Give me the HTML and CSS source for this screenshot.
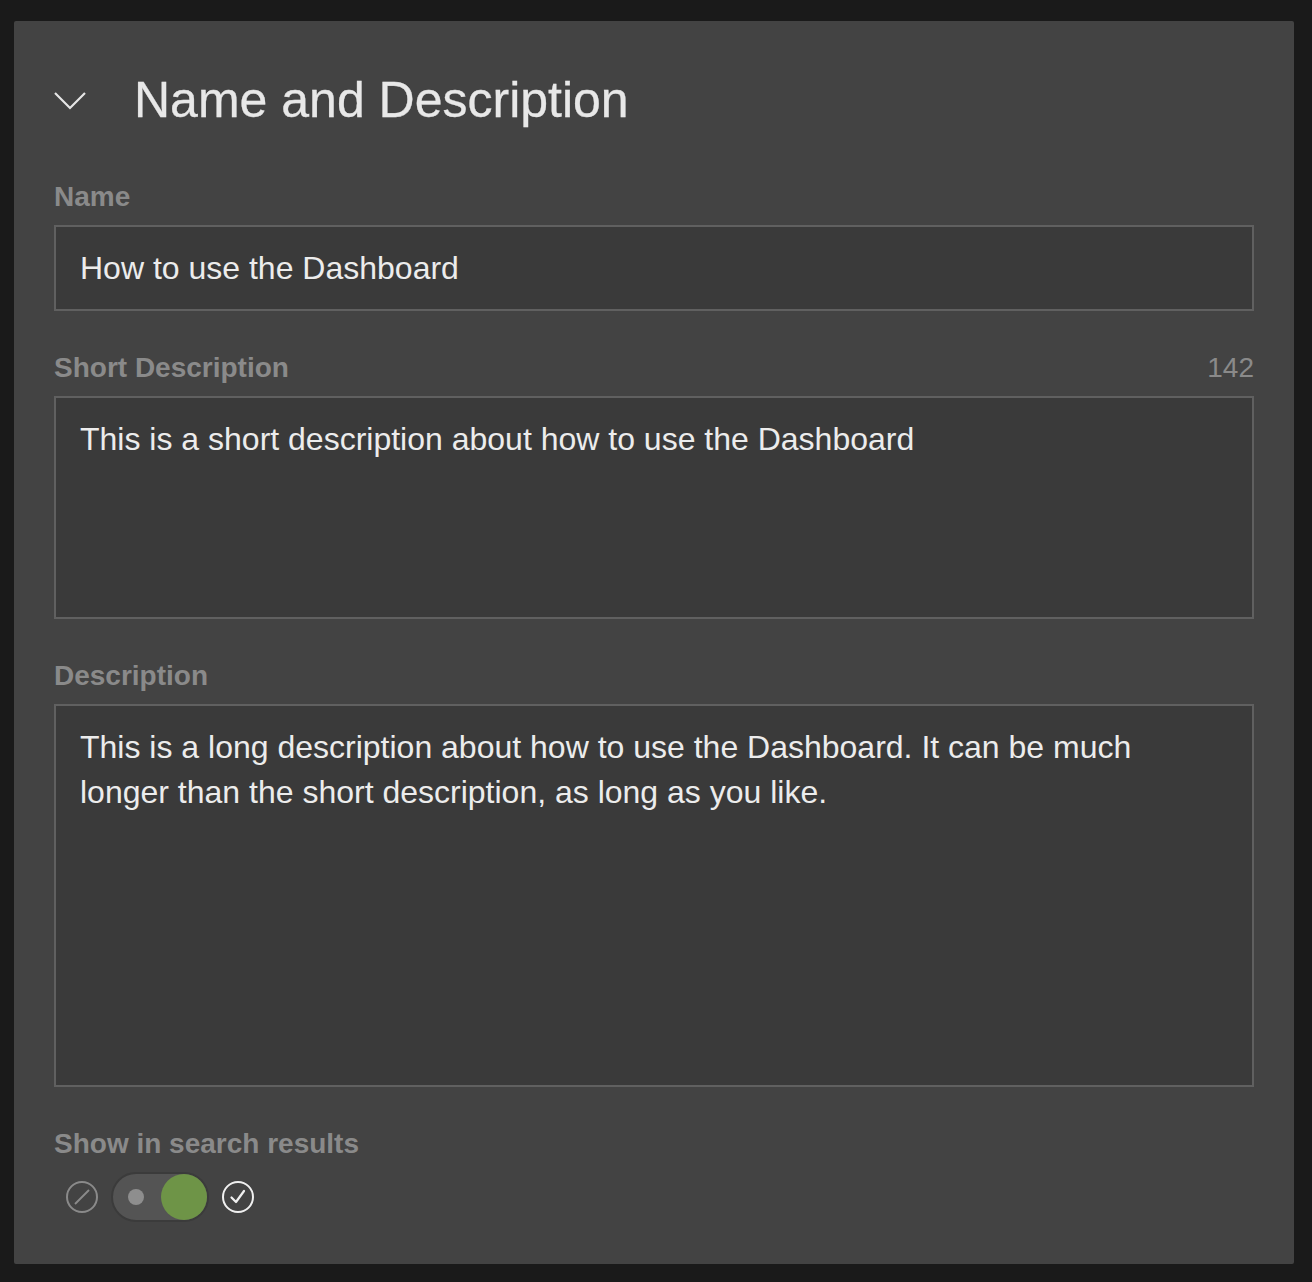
FILE: index.html
```html
<!DOCTYPE html>
<html lang="en">
<head>
<meta charset="utf-8">
<title>Name and Description</title>
<link rel="stylesheet" href="styles.css">
</head>
<body>
<section class="panel">
  <header class="panel-header">
    <svg class="chevron" width="32" height="18" viewBox="0 0 32 18" aria-hidden="true">
      <polyline points="1,1 16,16 31,1" fill="none" stroke="#e6e6e6" stroke-width="2.2"/>
    </svg>
    <h1 class="title">Name and Description</h1>
  </header>

  <div class="field">
    <div class="label-row"><span class="label">Name</span></div>
    <div class="input">How to use the Dashboard</div>
  </div>

  <div class="field">
    <div class="label-row"><span class="label">Short Description</span><span class="counter">142</span></div>
    <div class="textarea short">This is a short description about how to use the Dashboard</div>
  </div>

  <div class="field">
    <div class="label-row"><span class="label">Description</span></div>
    <div class="textarea long">This is a long description about how to use the Dashboard. It can be much longer than the short description, as long as you like.</div>
  </div>

  <div class="field">
    <div class="label-row"><span class="label">Show in search results</span></div>
    <div class="toggle-row">
      <svg class="icon" width="32" height="32" viewBox="0 0 32 32" aria-hidden="true">
        <circle cx="16" cy="16" r="15" fill="none" stroke="#8a8a8a" stroke-width="2"/>
        <line x1="9" y1="23" x2="23" y2="9" stroke="#8a8a8a" stroke-width="2"/>
      </svg>
      <div class="toggle">
        <span class="toggle-dot"></span>
        <span class="toggle-knob"></span>
      </div>
      <svg class="icon" width="32" height="32" viewBox="0 0 32 32" aria-hidden="true">
        <circle cx="16" cy="16" r="15" fill="none" stroke="#f0f0f0" stroke-width="2"/>
        <polyline points="9.5,16.5 14,21 22,10" fill="none" stroke="#f0f0f0" stroke-width="2.2" stroke-linecap="round" stroke-linejoin="round"/>
      </svg>
    </div>
  </div>
</section>
</body>
</html>
```

FILE: styles.css
```css
html, body {
  margin: 0;
  padding: 0;
}

body {
  background: #1a1a1a;
  font-family: "Liberation Sans", Arial, Helvetica, sans-serif;
  padding: 21px 0 18px 14px;
}

.panel {
  width: 1280px;
  height: 1243px;
  box-sizing: border-box;
  background: #434343;
  padding: 49px 40px 40px 40px;
  border-radius: 2px;
}

.panel-header {
  display: flex;
  align-items: center;
  height: 60px;
  margin-bottom: 51px;
}

.chevron {
  display: block;
  margin-right: 48px;
  margin-top: 1px;
}

.title {
  margin: 0;
  font-size: 50px;
  line-height: 60px;
  font-weight: 400;
  color: #e8e8e8;
  -webkit-text-stroke: 0.3px #e8e8e8;
}

.field {
  margin-bottom: 41px;
}

.field:last-child {
  margin-bottom: 0;
}

.label-row {
  display: flex;
  justify-content: space-between;
  align-items: baseline;
  height: 32px;
  line-height: 32px;
  margin-bottom: 12px;
}

.label {
  font-size: 28px;
  font-weight: 700;
  color: #8a8a8a;
}

.counter {
  font-size: 28px;
  color: #8a8a8a;
}

.input,
.textarea {
  box-sizing: border-box;
  width: 1200px;
  background: #3a3a3a;
  border: 2px solid #606060;
  color: #ececec;
  font-size: 32px;
}

.input {
  height: 86px;
  padding: 0 24px;
  line-height: 82px;
}

.textarea {
  padding: 19px 24px;
  line-height: 45px;
}

.textarea.short {
  height: 223px;
}

.textarea.long {
  height: 383px;
}

.toggle-row {
  display: flex;
  align-items: center;
  gap: 13px;
  margin-left: 12px;
  margin-top: 1px;
}

.icon {
  display: block;
}

.toggle {
  position: relative;
  box-sizing: border-box;
  width: 98px;
  height: 50px;
  border-radius: 25px;
  background: #545454;
  border: 2px solid #3b3b3b;
}

.toggle-dot {
  position: absolute;
  left: 15px;
  top: 15px;
  width: 16px;
  height: 16px;
  border-radius: 50%;
  background: #8e8e8e;
}

.toggle-knob {
  position: absolute;
  right: 0px;
  top: 0px;
  width: 46px;
  height: 46px;
  border-radius: 50%;
  background: #6e9447;
}
```
